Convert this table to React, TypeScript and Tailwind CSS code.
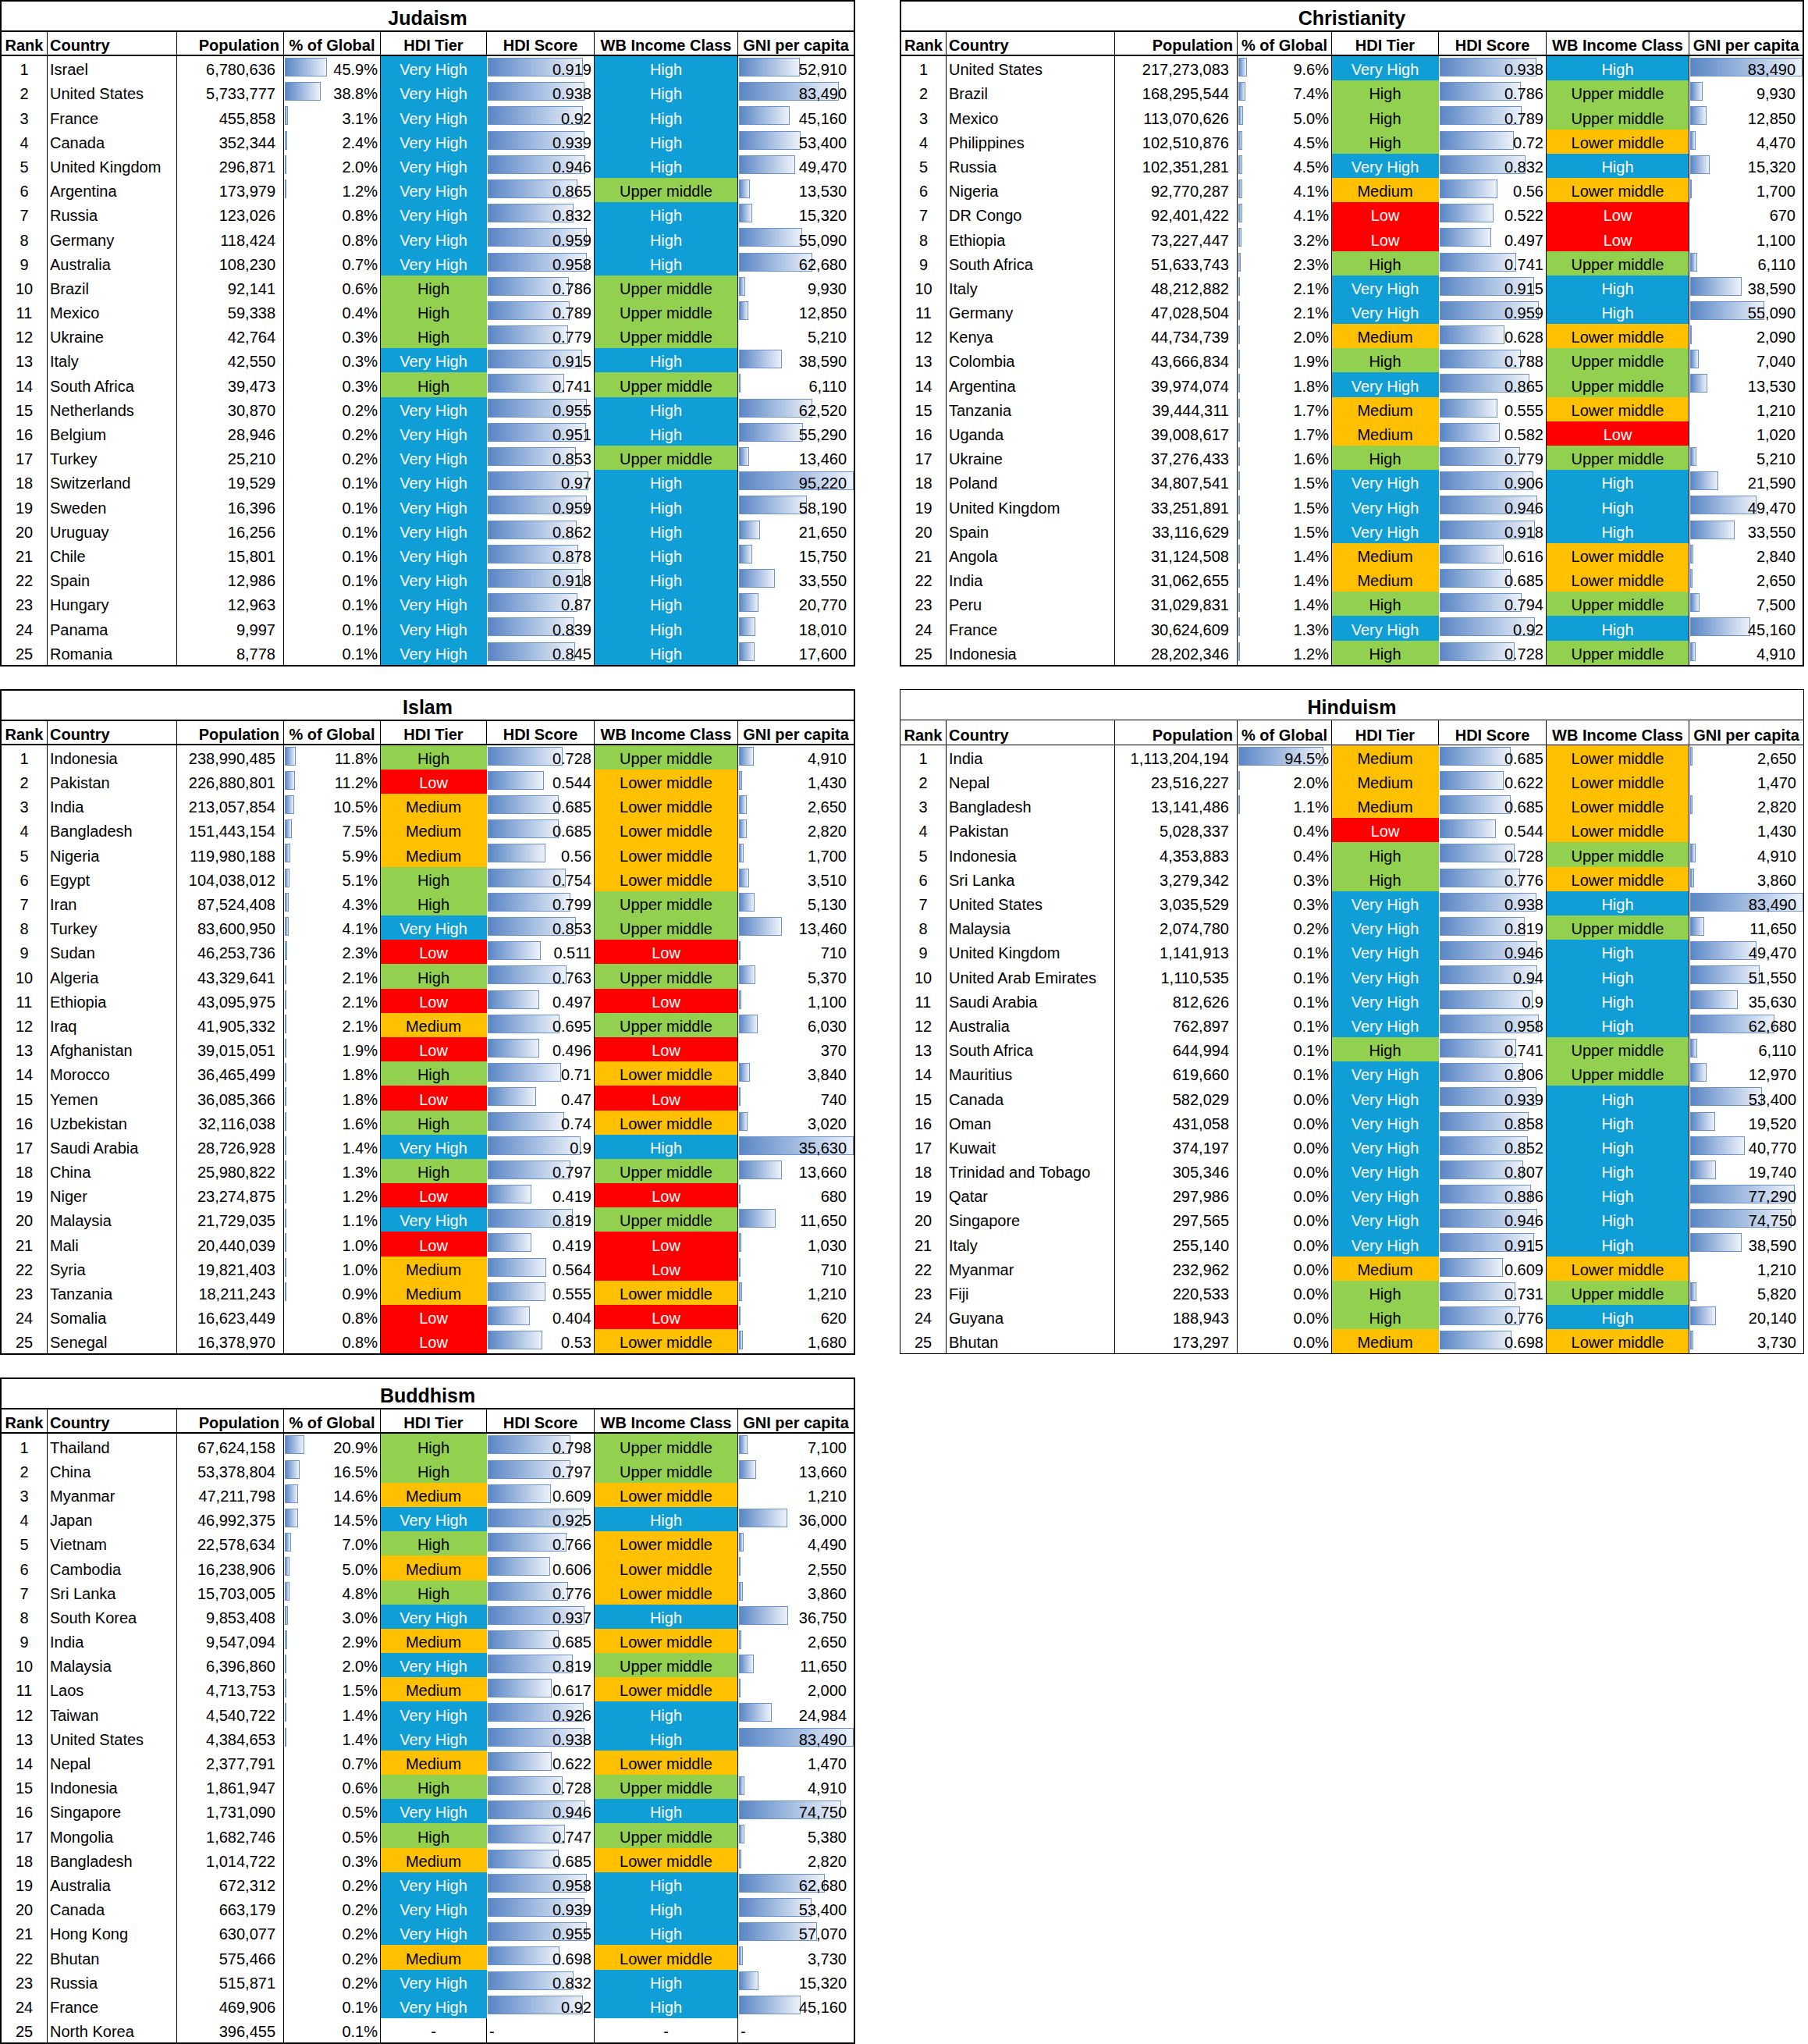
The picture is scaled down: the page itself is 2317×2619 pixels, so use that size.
import React from "react";

type Row = [string, string, string, string, string, string, string];

interface TableDef {
  title: string;
  rows: Row[];
}

const judaism: Row[] = [
  ["Israel", "6,780,636", "45.9%", "Very High", "0.919", "High", "52,910"],
  ["United States", "5,733,777", "38.8%", "Very High", "0.938", "High", "83,490"],
  ["France", "455,858", "3.1%", "Very High", "0.92", "High", "45,160"],
  ["Canada", "352,344", "2.4%", "Very High", "0.939", "High", "53,400"],
  ["United Kingdom", "296,871", "2.0%", "Very High", "0.946", "High", "49,470"],
  ["Argentina", "173,979", "1.2%", "Very High", "0.865", "Upper middle", "13,530"],
  ["Russia", "123,026", "0.8%", "Very High", "0.832", "High", "15,320"],
  ["Germany", "118,424", "0.8%", "Very High", "0.959", "High", "55,090"],
  ["Australia", "108,230", "0.7%", "Very High", "0.958", "High", "62,680"],
  ["Brazil", "92,141", "0.6%", "High", "0.786", "Upper middle", "9,930"],
  ["Mexico", "59,338", "0.4%", "High", "0.789", "Upper middle", "12,850"],
  ["Ukraine", "42,764", "0.3%", "High", "0.779", "Upper middle", "5,210"],
  ["Italy", "42,550", "0.3%", "Very High", "0.915", "High", "38,590"],
  ["South Africa", "39,473", "0.3%", "High", "0.741", "Upper middle", "6,110"],
  ["Netherlands", "30,870", "0.2%", "Very High", "0.955", "High", "62,520"],
  ["Belgium", "28,946", "0.2%", "Very High", "0.951", "High", "55,290"],
  ["Turkey", "25,210", "0.2%", "Very High", "0.853", "Upper middle", "13,460"],
  ["Switzerland", "19,529", "0.1%", "Very High", "0.97", "High", "95,220"],
  ["Sweden", "16,396", "0.1%", "Very High", "0.959", "High", "58,190"],
  ["Uruguay", "16,256", "0.1%", "Very High", "0.862", "High", "21,650"],
  ["Chile", "15,801", "0.1%", "Very High", "0.878", "High", "15,750"],
  ["Spain", "12,986", "0.1%", "Very High", "0.918", "High", "33,550"],
  ["Hungary", "12,963", "0.1%", "Very High", "0.87", "High", "20,770"],
  ["Panama", "9,997", "0.1%", "Very High", "0.839", "High", "18,010"],
  ["Romania", "8,778", "0.1%", "Very High", "0.845", "High", "17,600"],
];

const christianity: Row[] = [
  ["United States", "217,273,083", "9.6%", "Very High", "0.938", "High", "83,490"],
  ["Brazil", "168,295,544", "7.4%", "High", "0.786", "Upper middle", "9,930"],
  ["Mexico", "113,070,626", "5.0%", "High", "0.789", "Upper middle", "12,850"],
  ["Philippines", "102,510,876", "4.5%", "High", "0.72", "Lower middle", "4,470"],
  ["Russia", "102,351,281", "4.5%", "Very High", "0.832", "High", "15,320"],
  ["Nigeria", "92,770,287", "4.1%", "Medium", "0.56", "Lower middle", "1,700"],
  ["DR Congo", "92,401,422", "4.1%", "Low", "0.522", "Low", "670"],
  ["Ethiopia", "73,227,447", "3.2%", "Low", "0.497", "Low", "1,100"],
  ["South Africa", "51,633,743", "2.3%", "High", "0.741", "Upper middle", "6,110"],
  ["Italy", "48,212,882", "2.1%", "Very High", "0.915", "High", "38,590"],
  ["Germany", "47,028,504", "2.1%", "Very High", "0.959", "High", "55,090"],
  ["Kenya", "44,734,739", "2.0%", "Medium", "0.628", "Lower middle", "2,090"],
  ["Colombia", "43,666,834", "1.9%", "High", "0.788", "Upper middle", "7,040"],
  ["Argentina", "39,974,074", "1.8%", "Very High", "0.865", "Upper middle", "13,530"],
  ["Tanzania", "39,444,311", "1.7%", "Medium", "0.555", "Lower middle", "1,210"],
  ["Uganda", "39,008,617", "1.7%", "Medium", "0.582", "Low", "1,020"],
  ["Ukraine", "37,276,433", "1.6%", "High", "0.779", "Upper middle", "5,210"],
  ["Poland", "34,807,541", "1.5%", "Very High", "0.906", "High", "21,590"],
  ["United Kingdom", "33,251,891", "1.5%", "Very High", "0.946", "High", "49,470"],
  ["Spain", "33,116,629", "1.5%", "Very High", "0.918", "High", "33,550"],
  ["Angola", "31,124,508", "1.4%", "Medium", "0.616", "Lower middle", "2,840"],
  ["India", "31,062,655", "1.4%", "Medium", "0.685", "Lower middle", "2,650"],
  ["Peru", "31,029,831", "1.4%", "High", "0.794", "Upper middle", "7,500"],
  ["France", "30,624,609", "1.3%", "Very High", "0.92", "High", "45,160"],
  ["Indonesia", "28,202,346", "1.2%", "High", "0.728", "Upper middle", "4,910"],
];

const islam: Row[] = [
  ["Indonesia", "238,990,485", "11.8%", "High", "0.728", "Upper middle", "4,910"],
  ["Pakistan", "226,880,801", "11.2%", "Low", "0.544", "Lower middle", "1,430"],
  ["India", "213,057,854", "10.5%", "Medium", "0.685", "Lower middle", "2,650"],
  ["Bangladesh", "151,443,154", "7.5%", "Medium", "0.685", "Lower middle", "2,820"],
  ["Nigeria", "119,980,188", "5.9%", "Medium", "0.56", "Lower middle", "1,700"],
  ["Egypt", "104,038,012", "5.1%", "High", "0.754", "Lower middle", "3,510"],
  ["Iran", "87,524,408", "4.3%", "High", "0.799", "Upper middle", "5,130"],
  ["Turkey", "83,600,950", "4.1%", "Very High", "0.853", "Upper middle", "13,460"],
  ["Sudan", "46,253,736", "2.3%", "Low", "0.511", "Low", "710"],
  ["Algeria", "43,329,641", "2.1%", "High", "0.763", "Upper middle", "5,370"],
  ["Ethiopia", "43,095,975", "2.1%", "Low", "0.497", "Low", "1,100"],
  ["Iraq", "41,905,332", "2.1%", "Medium", "0.695", "Upper middle", "6,030"],
  ["Afghanistan", "39,015,051", "1.9%", "Low", "0.496", "Low", "370"],
  ["Morocco", "36,465,499", "1.8%", "High", "0.71", "Lower middle", "3,840"],
  ["Yemen", "36,085,366", "1.8%", "Low", "0.47", "Low", "740"],
  ["Uzbekistan", "32,116,038", "1.6%", "High", "0.74", "Lower middle", "3,020"],
  ["Saudi Arabia", "28,726,928", "1.4%", "Very High", "0.9", "High", "35,630"],
  ["China", "25,980,822", "1.3%", "High", "0.797", "Upper middle", "13,660"],
  ["Niger", "23,274,875", "1.2%", "Low", "0.419", "Low", "680"],
  ["Malaysia", "21,729,035", "1.1%", "Very High", "0.819", "Upper middle", "11,650"],
  ["Mali", "20,440,039", "1.0%", "Low", "0.419", "Low", "1,030"],
  ["Syria", "19,821,403", "1.0%", "Medium", "0.564", "Low", "710"],
  ["Tanzania", "18,211,243", "0.9%", "Medium", "0.555", "Lower middle", "1,210"],
  ["Somalia", "16,623,449", "0.8%", "Low", "0.404", "Low", "620"],
  ["Senegal", "16,378,970", "0.8%", "Low", "0.53", "Lower middle", "1,680"],
];

const hinduism: Row[] = [
  ["India", "1,113,204,194", "94.5%", "Medium", "0.685", "Lower middle", "2,650"],
  ["Nepal", "23,516,227", "2.0%", "Medium", "0.622", "Lower middle", "1,470"],
  ["Bangladesh", "13,141,486", "1.1%", "Medium", "0.685", "Lower middle", "2,820"],
  ["Pakistan", "5,028,337", "0.4%", "Low", "0.544", "Lower middle", "1,430"],
  ["Indonesia", "4,353,883", "0.4%", "High", "0.728", "Upper middle", "4,910"],
  ["Sri Lanka", "3,279,342", "0.3%", "High", "0.776", "Lower middle", "3,860"],
  ["United States", "3,035,529", "0.3%", "Very High", "0.938", "High", "83,490"],
  ["Malaysia", "2,074,780", "0.2%", "Very High", "0.819", "Upper middle", "11,650"],
  ["United Kingdom", "1,141,913", "0.1%", "Very High", "0.946", "High", "49,470"],
  ["United Arab Emirates", "1,110,535", "0.1%", "Very High", "0.94", "High", "51,550"],
  ["Saudi Arabia", "812,626", "0.1%", "Very High", "0.9", "High", "35,630"],
  ["Australia", "762,897", "0.1%", "Very High", "0.958", "High", "62,680"],
  ["South Africa", "644,994", "0.1%", "High", "0.741", "Upper middle", "6,110"],
  ["Mauritius", "619,660", "0.1%", "Very High", "0.806", "Upper middle", "12,970"],
  ["Canada", "582,029", "0.0%", "Very High", "0.939", "High", "53,400"],
  ["Oman", "431,058", "0.0%", "Very High", "0.858", "High", "19,520"],
  ["Kuwait", "374,197", "0.0%", "Very High", "0.852", "High", "40,770"],
  ["Trinidad and Tobago", "305,346", "0.0%", "Very High", "0.807", "High", "19,740"],
  ["Qatar", "297,986", "0.0%", "Very High", "0.886", "High", "77,290"],
  ["Singapore", "297,565", "0.0%", "Very High", "0.946", "High", "74,750"],
  ["Italy", "255,140", "0.0%", "Very High", "0.915", "High", "38,590"],
  ["Myanmar", "232,962", "0.0%", "Medium", "0.609", "Lower middle", "1,210"],
  ["Fiji", "220,533", "0.0%", "High", "0.731", "Upper middle", "5,820"],
  ["Guyana", "188,943", "0.0%", "High", "0.776", "High", "20,140"],
  ["Bhutan", "173,297", "0.0%", "Medium", "0.698", "Lower middle", "3,730"],
];

const buddhism: Row[] = [
  ["Thailand", "67,624,158", "20.9%", "High", "0.798", "Upper middle", "7,100"],
  ["China", "53,378,804", "16.5%", "High", "0.797", "Upper middle", "13,660"],
  ["Myanmar", "47,211,798", "14.6%", "Medium", "0.609", "Lower middle", "1,210"],
  ["Japan", "46,992,375", "14.5%", "Very High", "0.925", "High", "36,000"],
  ["Vietnam", "22,578,634", "7.0%", "High", "0.766", "Lower middle", "4,490"],
  ["Cambodia", "16,238,906", "5.0%", "Medium", "0.606", "Lower middle", "2,550"],
  ["Sri Lanka", "15,703,005", "4.8%", "High", "0.776", "Lower middle", "3,860"],
  ["South Korea", "9,853,408", "3.0%", "Very High", "0.937", "High", "36,750"],
  ["India", "9,547,094", "2.9%", "Medium", "0.685", "Lower middle", "2,650"],
  ["Malaysia", "6,396,860", "2.0%", "Very High", "0.819", "Upper middle", "11,650"],
  ["Laos", "4,713,753", "1.5%", "Medium", "0.617", "Lower middle", "2,000"],
  ["Taiwan", "4,540,722", "1.4%", "Very High", "0.926", "High", "24,984"],
  ["United States", "4,384,653", "1.4%", "Very High", "0.938", "High", "83,490"],
  ["Nepal", "2,377,791", "0.7%", "Medium", "0.622", "Lower middle", "1,470"],
  ["Indonesia", "1,861,947", "0.6%", "High", "0.728", "Upper middle", "4,910"],
  ["Singapore", "1,731,090", "0.5%", "Very High", "0.946", "High", "74,750"],
  ["Mongolia", "1,682,746", "0.5%", "High", "0.747", "Upper middle", "5,380"],
  ["Bangladesh", "1,014,722", "0.3%", "Medium", "0.685", "Lower middle", "2,820"],
  ["Australia", "672,312", "0.2%", "Very High", "0.958", "High", "62,680"],
  ["Canada", "663,179", "0.2%", "Very High", "0.939", "High", "53,400"],
  ["Hong Kong", "630,077", "0.2%", "Very High", "0.955", "High", "57,070"],
  ["Bhutan", "575,466", "0.2%", "Medium", "0.698", "Lower middle", "3,730"],
  ["Russia", "515,871", "0.2%", "Very High", "0.832", "High", "15,320"],
  ["France", "469,906", "0.1%", "Very High", "0.92", "High", "45,160"],
  ["North Korea", "396,455", "0.1%", "-", "-", "-", "-"],
];

const tierFill: Record<string, string> = {
  "Very High": "bg-[#0f9ed5] text-white border-r-transparent",
  High: "bg-[#92d050] text-black border-r-transparent",
  Medium: "bg-[#ffc000] text-black border-r-transparent",
  Low: "bg-[#ff0000] text-white border-r-transparent",
};

const incomeFill: Record<string, string> = {
  High: "bg-[#0f9ed5] text-white",
  "Upper middle": "bg-[#92d050] text-black",
  "Lower middle": "bg-[#ffc000] text-black",
  Low: "bg-[#ff0000] text-white",
};

const num = (s: string) => parseFloat(s.replace(/,/g, ""));

// excel style gradient data bar, sits under the cell text
const DataBar: React.FC<{ width: number }> = ({ width }) => {
  if (width < 1) return null;
  return (
    <div
      className="absolute left-[1px] top-[2px] h-[24px] border border-[#6b93cb] bg-linear-to-r from-[#5a86c5] to-[#eef2f9]"
      style={{ width }}
    />
  );
};

interface Layout {
  cols: string;
  pctScale: number;
  gniScale: number;
  thin: boolean;
}

const leftLayout: Layout = {
  cols: "grid-cols-[59px_166px_137px_124px_136px_138px_184px_148px]",
  pctScale: 118,
  gniScale: 147,
  thin: false,
};

const rightLayout: Layout = {
  cols: "grid-cols-[58px_216px_157px_121px_137px_138px_183px_145px]",
  pctScale: 115,
  gniScale: 144,
  thin: false,
};

const rightThinLayout: Layout = {
  cols: "grid-cols-[59px_216px_157px_121px_137px_138px_183px_146px]",
  pctScale: 115,
  gniScale: 145,
  thin: true,
};

const cell = "relative flex items-end pb-[3px] leading-[22px] border-r border-black whitespace-nowrap";

const ReligionTable: React.FC<{ def: TableDef; layout: Layout }> = ({ def, layout }) => {
  const gnis = def.rows.map((r) => num(r[6])).filter((v) => !isNaN(v));
  const gMin = Math.min(...gnis);
  const gMax = Math.max(...gnis);

  return (
    <div className={`bg-white text-black ${layout.thin ? "border border-black" : "border-2 border-black"}`}>
      <div
        className={`flex items-end justify-center pb-[2px] text-[25px] font-bold leading-[28px] ${
          layout.thin ? "h-[39px] border-b border-black" : "h-[39px] border-b-2 border-black"
        }`}
      >
        {def.title}
      </div>

      <div
        className={`grid ${layout.cols} text-[20px] font-bold leading-[22px] ${
          layout.thin ? "h-[32px] border-b border-black" : "h-[31px] border-b-2 border-black"
        }`}
      >
        <div className="flex items-end justify-center border-r border-black pb-[1px]">Rank</div>
        <div className="flex items-end border-r border-black pb-[1px] pl-[3px]">Country</div>
        <div className="flex items-end justify-end border-r border-black pb-[1px] pr-[5px]">Population</div>
        <div className="flex items-end justify-center border-r border-black pb-[1px] whitespace-nowrap">% of Global</div>
        <div className="flex items-end justify-center border-r border-black pb-[1px]">HDI Tier</div>
        <div className="flex items-end justify-center border-r border-black pb-[1px]">HDI Score</div>
        <div className="flex items-end justify-center border-r border-black pb-[1px] whitespace-nowrap">WB Income Class</div>
        <div className="flex items-end justify-center pb-[1px] whitespace-nowrap">GNI per capita</div>
      </div>

      {def.rows.map((r, i) => {
        const [country, pop, pct, tier, score, wb, gni] = r;
        const gniVal = num(gni);
        const scoreVal = num(score);
        return (
          <div key={i} className={`grid ${layout.cols} h-[31.2px] text-[20px]`}>
            <div className={`${cell} justify-center`}>{i + 1}</div>
            <div className={`${cell} pl-[3px]`}>{country}</div>
            <div className={`${cell} justify-end pr-[10px]`}>{pop}</div>
            <div className={`${cell} justify-end pr-[3px]`}>
              <DataBar width={(num(pct) / 100) * layout.pctScale} />
              <span className="relative">{pct}</span>
            </div>
            <div className={`${cell} justify-center ${tierFill[tier] ?? ""}`}>{tier}</div>
            <div className={`${cell} ${isNaN(scoreVal) ? "justify-start pl-[3px]" : "justify-end pr-[3px]"}`}>
              {!isNaN(scoreVal) && <DataBar width={scoreVal * 132.5} />}
              <span className="relative">{score}</span>
            </div>
            <div className={`${cell} justify-center ${incomeFill[wb] ?? ""}`}>{wb}</div>
            <div
              className={`relative flex items-end pb-[3px] leading-[22px] ${
                isNaN(gniVal) ? "justify-start pl-[3px]" : "justify-end pr-[9px]"
              }`}
            >
              {!isNaN(gniVal) && <DataBar width={((gniVal - gMin) / (gMax - gMin)) * layout.gniScale} />}
              <span className="relative">{gni}</span>
            </div>
          </div>
        );
      })}
    </div>
  );
};

export default function App() {
  return (
    <div
      className="w-[2317px] min-h-[2619px] bg-white"
      style={{ fontFamily: '"Liberation Sans", Arial, sans-serif' }}
    >
      <div className="grid grid-cols-[1096px_1159px] gap-x-[57px] gap-y-[29px] items-start">
        <ReligionTable def={{ title: "Judaism", rows: judaism }} layout={leftLayout} />
        <ReligionTable def={{ title: "Christianity", rows: christianity }} layout={rightLayout} />
        <ReligionTable def={{ title: "Islam", rows: islam }} layout={leftLayout} />
        <ReligionTable def={{ title: "Hinduism", rows: hinduism }} layout={rightThinLayout} />
        <ReligionTable def={{ title: "Buddhism", rows: buddhism }} layout={leftLayout} />
      </div>
    </div>
  );
}
